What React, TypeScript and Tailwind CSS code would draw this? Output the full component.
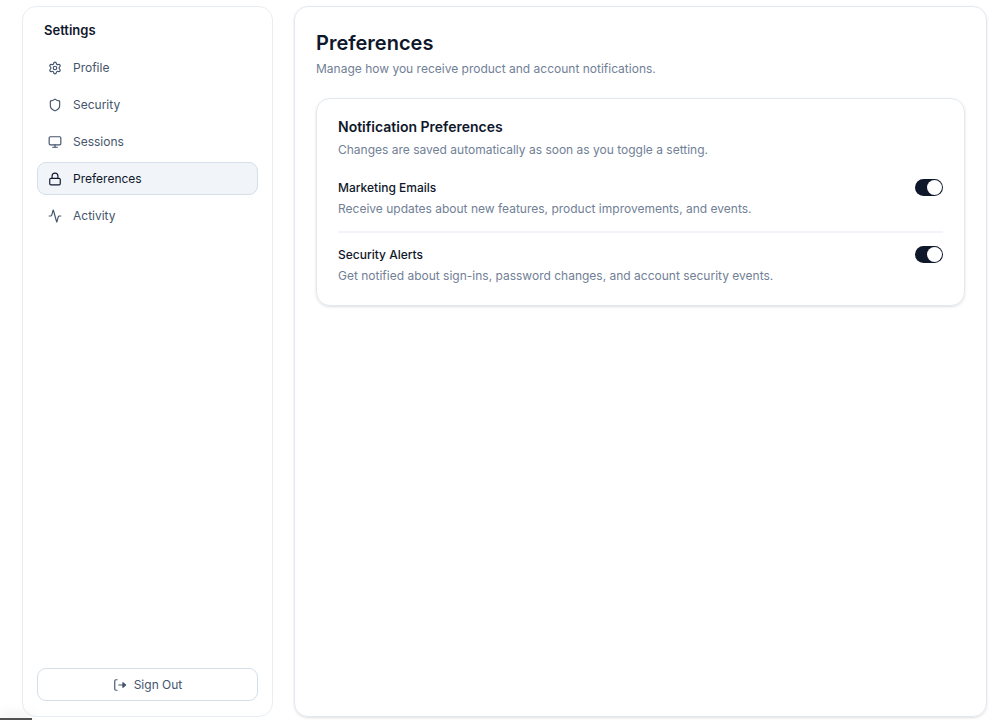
import { useState } from "react";
import { Settings, Shield, Monitor, Lock, Activity } from "lucide-react";

const navItems = [
  { label: "Profile", icon: Settings },
  { label: "Security", icon: Shield },
  { label: "Sessions", icon: Monitor },
  { label: "Preferences", icon: Lock },
  { label: "Activity", icon: Activity },
];

const preferences = [
  {
    id: "marketing-emails",
    title: "Marketing Emails",
    description: "Receive updates about new features, product improvements, and events.",
  },
  {
    id: "security-alerts",
    title: "Security Alerts",
    description: "Get notified about sign-ins, password changes, and account security events.",
  },
];

function SignOutIcon() {
  return (
    <svg
      className="size-[14px]"
      viewBox="0 0 24 24"
      fill="none"
      stroke="currentColor"
      strokeWidth="2"
      strokeLinecap="round"
      strokeLinejoin="round"
      aria-hidden="true"
    >
      <path d="M7 3H5a2 2 0 0 0-2 2v14a2 2 0 0 0 2 2h2" />
      <path d="m17 8 4.5 4-4.5 4z" fill="currentColor" />
      <path d="M21 12H10" />
    </svg>
  );
}

function PreferenceRow({ id, title, description }: (typeof preferences)[number]) {
  const [enabled, setEnabled] = useState(true);
  return (
    <div className="flex items-start justify-between gap-4 border-b-2 border-slate-100 pt-3 pb-3 last:border-b-0 last:pb-0">
      <div>
        <label htmlFor={id} className="block text-xs leading-5 font-medium text-slate-900">
          {title}
        </label>
        <p id={`${id}-description`} className="mt-px text-xs leading-5 text-[#718096]">
          {description}
        </p>
      </div>
      <input
        id={id}
        type="checkbox"
        role="switch"
        aria-describedby={`${id}-description`}
        checked={enabled}
        onChange={() => setEnabled(!enabled)}
        className="mt-px h-[17px] w-7 shrink-0 cursor-pointer appearance-none rounded-full bg-slate-300 p-px before:block before:size-[15px] before:rounded-full before:bg-white checked:bg-slate-900 checked:before:ml-auto"
      />
    </div>
  );
}

export default function App() {
  return (
    <div className="flex min-h-screen gap-[21px] bg-white pt-[6px] pr-[18px] pb-[3px] pl-[22px] font-['Inter',sans-serif] text-slate-900">
      <aside className="flex w-[251px] shrink-0 flex-col rounded-[14px] border border-slate-200/80 px-[14px] pt-[13px] pb-[15px]">
        <h2 className="px-[7px] text-[13px] leading-5 font-semibold">Settings</h2>
        <nav aria-label="Settings" className="mt-[11px] flex flex-col gap-1">
          {navItems.map(({ label, icon: Icon }) => {
            const active = label === "Preferences";
            return (
              <a
                key={label}
                href={`#${label.toLowerCase()}`}
                aria-current={active ? "page" : undefined}
                className={
                  "flex h-[33px] items-center gap-[11px] rounded-[9px] border px-[10px] text-xs leading-5 " +
                  (active
                    ? "border-[#d5dee9] bg-slate-100 text-slate-900"
                    : "border-transparent text-slate-600")
                }
              >
                <Icon className="size-[14px]" aria-hidden="true" />
                {label}
              </a>
            );
          })}
        </nav>
        <button
          type="button"
          className="mt-auto flex h-[33px] cursor-pointer items-center justify-center gap-[7px] rounded-[9px] border border-[#d5dee9] bg-white text-xs leading-5 text-slate-600"
        >
          <SignOutIcon />
          Sign Out
        </button>
      </aside>

      <main className="min-w-0 flex-1 rounded-[14px] border border-slate-200 px-[21px] pt-[22px] shadow-sm">
        <h1 className="text-xl leading-[29px] font-semibold">Preferences</h1>
        <p className="mt-px text-xs leading-5 text-[#718096]">
          Manage how you receive product and account notifications.
        </p>

        <section className="mt-[19px] rounded-[14px] border border-slate-200 px-[21px] pt-[18px] pb-[19px] shadow-sm">
          <h2 className="text-sm leading-5 font-semibold">Notification Preferences</h2>
          <p className="mt-[3px] text-xs leading-5 text-[#718096]">
            Changes are saved automatically as soon as you toggle a setting.
          </p>
          <div className="mt-1.5">
            {preferences.map((preference) => (
              <PreferenceRow key={preference.id} {...preference} />
            ))}
          </div>
        </section>
      </main>

      <div
        aria-hidden="true"
        className="fixed bottom-0 left-0 h-[2px] w-8 bg-neutral-600 shadow-[0_0_14px_rgba(0,0,0,0.3)]"
      />
    </div>
  );
}
